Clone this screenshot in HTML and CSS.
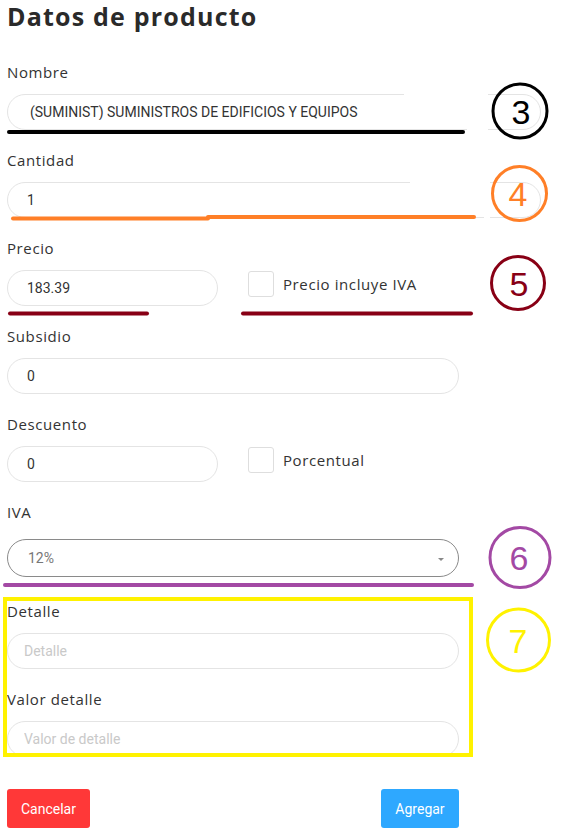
FILE: index.html
```html
<!DOCTYPE html>
<html lang="es">
<head>
<meta charset="utf-8">
<title>Datos de producto</title>
<link rel="stylesheet" href="styles.css">
</head>
<body>
<div class="page">
  <h1 class="title">Datos de producto</h1>
  <form class="form">
    <div class="field">
      <label class="label">Nombre</label>
      <input class="input input-xl input-name" type="text" value="(SUMINIST) SUMINISTROS DE EDIFICIOS Y EQUIPOS">
    </div>
    <div class="field">
      <label class="label">Cantidad</label>
      <input class="input input-xl" type="text" value="1">
    </div>
    <div class="field">
      <label class="label">Precio</label>
      <div class="row">
        <input class="input" type="text" value="183.39">
        <label class="check"><span class="box"></span><span class="check-text">Precio incluye IVA</span></label>
      </div>
    </div>
    <div class="field">
      <label class="label">Subsidio</label>
      <input class="input" type="text" value="0">
    </div>
    <div class="field">
      <label class="label">Descuento</label>
      <div class="row">
        <input class="input" type="text" value="0">
        <label class="check"><span class="box"></span><span class="check-text">Porcentual</span></label>
      </div>
    </div>
    <div class="field field-select">
      <label class="label">IVA</label>
      <div class="select">
        <span class="select-value">12%</span>
        <span class="caret"></span>
      </div>
    </div>
    <div class="field field-detail">
      <label class="label">Detalle</label>
      <input class="input input-ph" type="text" placeholder="Detalle">
    </div>
    <div class="field field-detail">
      <label class="label">Valor detalle</label>
      <input class="input input-ph" type="text" placeholder="Valor de detalle">
    </div>
    <div class="actions">
      <button type="button" class="btn btn-cancel">Cancelar</button>
      <button type="button" class="btn btn-add">Agregar</button>
    </div>
  </form>

  <svg class="notes" width="564" height="835" viewBox="0 0 564 835">
    <rect x="404" y="91" width="84" height="37" fill="#fff"/>
    <rect x="467" y="126" width="21" height="7" fill="#fff"/>
    <rect x="410" y="179" width="80" height="37" fill="#fff"/>
    <rect x="484" y="214" width="6" height="8" fill="#fff"/>

    <g fill="none" stroke-linecap="round">
      <line x1="9" y1="132" x2="463" y2="132" stroke="#000" stroke-width="4"/>
      <line x1="13" y1="218.5" x2="208" y2="218.5" stroke="#ff7f27" stroke-width="4"/>
      <line x1="208" y1="217" x2="474" y2="217" stroke="#ff7f27" stroke-width="4"/>
      <line x1="10" y1="313.5" x2="147" y2="313.5" stroke="#880015" stroke-width="4"/>
      <line x1="243" y1="313.5" x2="471" y2="313.5" stroke="#880015" stroke-width="4"/>
      <line x1="5" y1="585" x2="472" y2="585" stroke="#a349a4" stroke-width="4"/>
      <rect x="5" y="599" width="466" height="156" stroke="#fff200" stroke-width="4" stroke-linecap="butt"/>

      <circle cx="520" cy="111" r="27" stroke="#000" stroke-width="3"/>
      <circle cx="519.5" cy="193.5" r="27" stroke="#ff7f27" stroke-width="3"/>
      <circle cx="518" cy="283" r="26.5" stroke="#880015" stroke-width="3"/>
      <circle cx="520" cy="557.5" r="30" stroke="#a349a4" stroke-width="3"/>
      <circle cx="518.5" cy="640" r="31" stroke="#fff200" stroke-width="3"/>
    </g>
    <g class="num">
      <text x="521" y="124" fill="#000">3</text>
      <text x="518" y="206" fill="#ff7f27">4</text>
      <text x="519" y="296" fill="#880015">5</text>
      <text x="519" y="570" fill="#a349a4">6</text>
      <text x="518" y="653" fill="#fff200">7</text>
    </g>
  </svg>
</div>
</body>
</html>
```

FILE: styles.css
```css
* {
  box-sizing: border-box;
}

html, body {
  margin: 0;
  padding: 0;
  background: #fff;
}

.page {
  position: relative;
  width: 564px;
  height: 835px;
  overflow: hidden;
  padding-left: 7px;
}

.title {
  margin: 0;
  font-family: "Open Sans", "Noto Sans", sans-serif;
  font-weight: 700;
  font-size: 25px;
  line-height: 33px;
  letter-spacing: 1.2px;
  color: #2a2a2a;
}

.form {
  width: 452px;
  margin-top: 29px;
  display: flex;
  flex-direction: column;
}

.field {
  display: flex;
  flex-direction: column;
  margin-bottom: 20px;
}

.label {
  display: block;
  margin-bottom: 12px;
  font-family: "Open Sans", "Noto Sans", sans-serif;
  font-size: 15px;
  line-height: 20px;
  letter-spacing: 0.6px;
  color: #333;
}

.input {
  display: block;
  width: 100%;
  height: 36px;
  margin: 0;
  padding: 0 0 0 19px;
  border: 1px solid #e4e4e4;
  border-radius: 18px;
  background: #fff;
  font-family: Roboto, "Liberation Sans", sans-serif;
  font-size: 14px;
  color: #333;
  outline: none;
}

.input-xl {
  width: 534px;
}

.input-name {
  padding-left: 22px;
}

.input-ph {
  padding-left: 16px;
}

.input-ph::placeholder {
  color: #c9c9c9;
  opacity: 1;
}

.row {
  display: grid;
  grid-template-columns: 211px 211px;
  column-gap: 30px;
  align-items: start;
}

.check {
  display: flex;
  align-items: center;
  gap: 9px;
  margin-top: 1px;
  font-family: "Open Sans", "Noto Sans", sans-serif;
  font-size: 15px;
  line-height: 20px;
  letter-spacing: 0.6px;
  color: #333;
}

.box {
  flex: none;
  width: 26px;
  height: 26px;
  border: 1px solid #dedede;
  border-radius: 3px;
  background: #fff;
}

.field-select .label {
  margin-bottom: 17px;
}

.field-select {
  margin-bottom: 24px;
}

.select {
  display: flex;
  align-items: center;
  justify-content: space-between;
  height: 38px;
  padding: 0 14px 0 20px;
  border: 1px solid #8a8a8a;
  border-radius: 19px;
  font-family: Roboto, "Liberation Sans", sans-serif;
  font-size: 14px;
  color: #777;
}

.caret {
  width: 0;
  height: 0;
  margin-top: 3px;
  border-left: 3px solid transparent;
  border-right: 3px solid transparent;
  border-top: 3px solid #888;
}

.actions {
  display: flex;
  justify-content: space-between;
  margin-top: 12px;
}

.btn {
  height: 39px;
  border: 0;
  border-radius: 3px;
  padding: 0;
  font-family: Roboto, "Liberation Sans", sans-serif;
  font-size: 14px;
  color: #fff;
  cursor: pointer;
}

.btn-cancel {
  width: 83px;
  background: #ff3838;
}

.btn-add {
  width: 78px;
  background: #2ea8ff;
}

.notes {
  position: absolute;
  left: 0;
  top: 0;
  pointer-events: none;
}

.num text {
  font-family: "Liberation Sans", Arial, sans-serif;
  font-size: 34px;
  text-anchor: middle;
}
```
